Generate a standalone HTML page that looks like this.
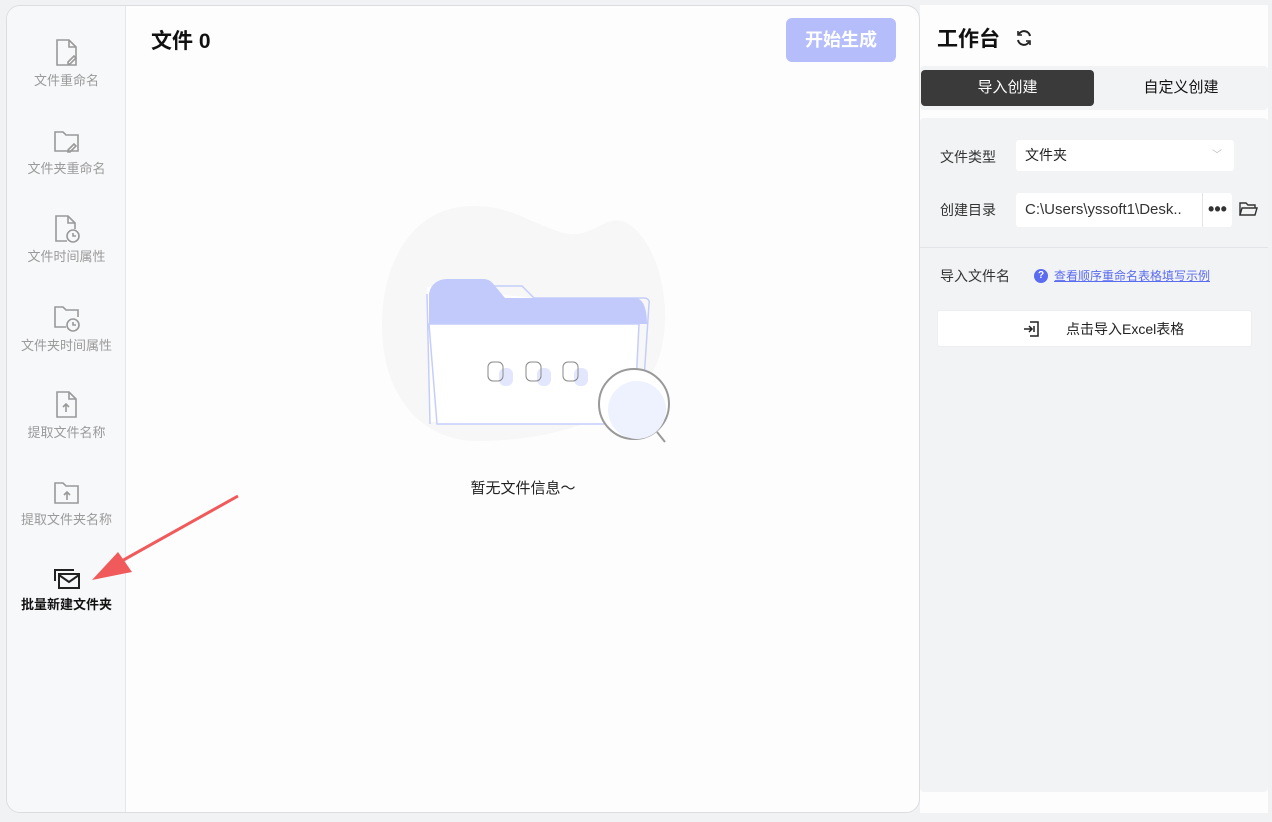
<!DOCTYPE html>
<html><head><meta charset="utf-8"><style>
*{margin:0;padding:0;box-sizing:border-box}
body{width:1272px;height:822px;background:#f1f2f4;font-family:"Liberation Sans","Noto Sans CJK SC",sans-serif;position:relative;overflow:hidden}
.card{position:absolute;left:6px;top:5px;width:914px;height:808px;background:#fdfdfd;border:1px solid #dcdde0;border-radius:14px;overflow:hidden}
.side{position:absolute;left:0;top:0;width:119px;height:100%;background:#f7f8fa;border-right:1px solid #e6e7ea}
.it{position:absolute;left:0;width:119px;text-align:center;font-size:13px;color:#9a9a9a;line-height:16px}
.it svg{display:block;margin:0 auto 5px}
.right{position:absolute;left:920px;top:5px;width:348px;height:808px;background:#fdfdfd}
.abs{position:absolute}
</style></head><body>
<div class="card">
 <div class="side">
  <div class="it" style="top:32px"><svg width="26" height="30" viewBox="0 0 26 30" fill="none" stroke="#999" stroke-width="1.6"><path d="M3 2h12l7 7v18H3z"/><path d="M15 2v7h7"/><path d="M14 24l6-6 2 2-6 6h-2z"/></svg>文件重命名</div>
  <div class="it" style="top:122px"><svg width="28" height="28" viewBox="0 0 28 28" fill="none" stroke="#999" stroke-width="1.6"><path d="M2 4h8l3 3h12v16H2z"/><path d="M15 22l6-6 2 2-6 6h-2z"/></svg>文件夹重命名</div>
  <div class="it" style="top:208px"><svg width="28" height="30" viewBox="0 0 28 30" fill="none" stroke="#999" stroke-width="1.6"><path d="M14 27H3V2h12l7 7v6"/><path d="M15 2v7h7"/><circle cx="20" cy="22" r="6"/><path d="M20 19v3h3"/></svg>文件时间属性</div>
  <div class="it" style="top:297px"><svg width="28" height="30" viewBox="0 0 28 30" fill="none" stroke="#999" stroke-width="1.6"><path d="M13 24H2V4h8l3 3h12v7"/><circle cx="20" cy="22" r="6"/><path d="M20 19v3h3"/></svg>文件夹时间属性</div>
  <div class="it" style="top:384px"><svg width="26" height="30" viewBox="0 0 26 30" fill="none" stroke="#999" stroke-width="1.6"><path d="M3 2h12l7 7v18H3z"/><path d="M15 2v7h7"/><path d="M12 22v-8M9 17l3-3 3 3"/></svg>提取文件名称</div>
  <div class="it" style="top:473px"><svg width="28" height="28" viewBox="0 0 28 28" fill="none" stroke="#999" stroke-width="1.6"><path d="M2 4h8l3 3h12v17H2z"/><path d="M14 21v-8M11 16l3-3 3 3"/></svg>提取文件夹名称</div>
  <div class="it" style="top:560px;color:#111;font-weight:bold"><svg width="30" height="26" viewBox="0 0 30 26" fill="none" stroke="#222" stroke-width="2"><path d="M3 15V4h19"/><rect x="7" y="8" width="20" height="14"/><path d="M7 9l10 7 10-7"/></svg>批量新建文件夹</div>
 </div>
 <div class="abs" style="left:144px;top:23px;font-size:21px;font-weight:bold;color:#111;line-height:26px">文件&nbsp;0</div>
 <div class="abs" style="left:779px;top:12px;width:110px;height:44px;background:#b5bdfb;border-radius:6px;color:#fff;font-size:18px;font-weight:bold;text-align:center;line-height:44px">开始生成</div>
 <svg class="abs" style="left:370px;top:190px" width="310" height="260" viewBox="0 0 310 260">
  <path d="M95 10C40 10 5 60 5 130s40 115 95 115c70 0 140-20 170-60s20-120-10-150S220 50 180 35 130 10 95 10z" fill="#f7f7f8"/>
  <path d="M108 97l-8-6h-50l2 135h160l30-115z" fill="#fff"/>
  <path d="M110 90h35l12 12h110c4 0 6 3 5 6l-8 120" fill="none" stroke="#c5cdfb" stroke-width="1.5"/>
  <path d="M53 228l-3-130" stroke="#c5cdfb" stroke-width="1.5"/>
  <path d="M52 128V100c0-10 8-17 18-17h36c6 0 9 3 12 7l10 12h130c7 0 12 8 12 26z" fill="#c2cafb"/>
  <path d="M52 128h210l-5 100H60z" fill="#fff" stroke="#c5cdfb" stroke-width="1.5"/>
  <g fill="#e3e7fd"><rect x="122" y="172" width="14" height="18" rx="6"/><rect x="160" y="172" width="14" height="18" rx="6"/><rect x="197" y="172" width="14" height="18" rx="6"/></g>
  <g fill="none" stroke="#888" stroke-width="1"><rect x="111" y="166" width="15" height="19" rx="5"/><rect x="149" y="166" width="15" height="19" rx="5"/><rect x="186" y="166" width="15" height="19" rx="5"/></g>
  <circle cx="257" cy="208" r="35" fill="#fff" stroke="#999" stroke-width="2"/>
  <circle cx="260" cy="214" r="29" fill="#eef1fe"/>
  <path d="M280 236l8 10" stroke="#999" stroke-width="2"/>
 </svg>
 <div class="abs" style="left:416px;width:200px;top:473px;text-align:center;font-size:15px;color:#222;line-height:20px">暂无文件信息～</div>
</div>
<svg class="abs" style="left:80px;top:490px" width="170" height="100"><path d="M158 6L22 82" stroke="#f15a5a" stroke-width="3"/><path d="M12 90l40-8-14-20z" fill="#f15a5a"/></svg>
<div class="right">
 <div class="abs" style="left:17px;top:22px;font-size:21px;font-weight:bold;color:#111;line-height:26px">工作台</div>
 <svg class="abs" style="left:95px;top:24px" width="18" height="18" viewBox="0 0 18 18" fill="none" stroke="#222" stroke-width="2"><path d="M15 7A6 6 0 0 0 4 5"/><path d="M3 11a6 6 0 0 0 11 2"/><path d="M3 2v4h4" stroke-width="1.6"/><path d="M15 16v-4h-4" stroke-width="1.6"/></svg>
 <div class="abs" style="left:0;top:61px;width:348px;height:44px;background:#f2f3f5;border-radius:4px"></div>
 <div class="abs" style="left:1px;top:65px;width:173px;height:36px;background:#3a3a3a;border-radius:4px;color:#fff;font-size:15px;text-align:center;line-height:36px">导入创建</div>
 <div class="abs" style="left:174px;top:65px;width:174px;height:36px;color:#111;font-size:15px;text-align:center;line-height:36px">自定义创建</div>
 <div class="abs" style="left:0;top:113px;width:348px;height:674px;background:#f2f3f5;border-radius:4px"></div>
 <div class="abs" style="left:20px;top:143px;font-size:14px;color:#333;line-height:18px">文件类型</div>
 <div class="abs" style="left:96px;top:135px;width:218px;height:31px;background:#fff;border-radius:3px;font-size:14px;color:#222;line-height:31px;padding-left:9px">文件夹<span style="position:absolute;right:12px;color:#bbb;font-size:10px">﹀</span></div>
 <div class="abs" style="left:20px;top:196px;font-size:14px;color:#333;line-height:18px">创建目录</div>
 <div class="abs" style="left:96px;top:188px;width:216px;height:34px;background:#fff;border-radius:3px;font-size:15px;color:#333;line-height:34px;padding-left:9px">C:\Users\yssoft1\Desk..<span style="position:absolute;right:0;top:0;width:30px;height:34px;border-left:1px solid #e5e5e5;text-align:center;font-weight:bold;font-size:18px;letter-spacing:0px;line-height:32px">•••</span></div>
 <svg class="abs" style="left:318px;top:195px" width="20" height="18" viewBox="0 0 20 18" fill="none" stroke="#333" stroke-width="1.4"><path d="M2 15V3h6l2 2h7v3"/><path d="M2 15l2-7h15l-2 7z"/></svg>
 <div class="abs" style="left:0;top:242px;width:348px;border-top:1px solid #e2e3e6"></div>
 <div class="abs" style="left:20px;top:262px;font-size:14px;color:#333;line-height:18px">导入文件名</div>
 <div class="abs" style="left:114px;top:264px;width:14px;height:14px;border-radius:50%;background:#5b6cf0;color:#fff;font-size:10px;font-weight:bold;text-align:center;line-height:14px">?</div>
 <div class="abs" style="left:134px;top:263px;font-size:12px;color:#5b6cf0;text-decoration:underline;line-height:16px">查看顺序重命名表格填写示例</div>
 <div class="abs" style="left:17px;top:305px;width:315px;height:37px;background:#fff;border-radius:3px;border:1px solid #eceef1;font-size:14px;color:#222;line-height:36px;padding-left:128px">点击导入Excel表格</div>
 <svg class="abs" style="left:102px;top:315px" width="18" height="18" viewBox="0 0 18 18" fill="none" stroke="#222" stroke-width="1.5"><path d="M8 2h8v14H8"/><path d="M2 9h8M7 6l3 3-3 3"/><path d="M12 6v6"/></svg>
</div>
</body></html>
